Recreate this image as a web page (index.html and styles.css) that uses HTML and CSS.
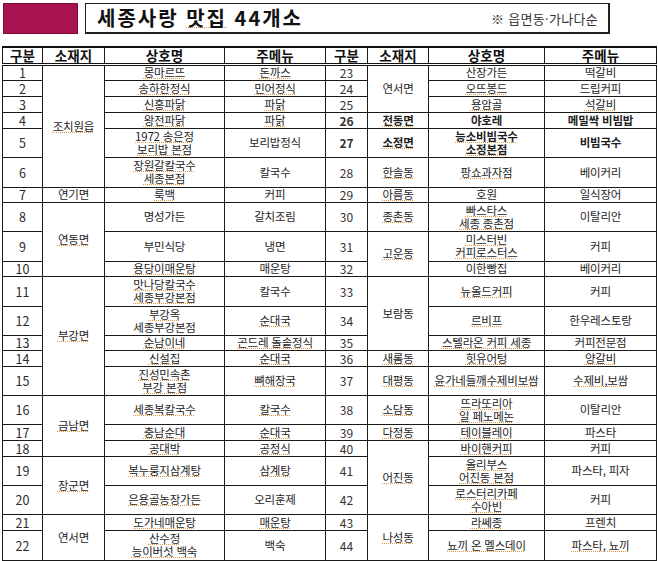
FILE: index.html
```html
<!DOCTYPE html>
<html lang="ko">
<head>
<meta charset="utf-8">
<title>세종사랑 맛집 44개소</title>
<link rel="stylesheet" href="styles.css">
</head>
<body>
<header class="top">
  <div class="swatch"></div>
  <div class="titlebox">
    <h1 class="title">세종사랑 <span class="u">맛집</span> 44개소</h1>
    <span class="note">※ 읍면동·가나다순</span>
  </div>
</header>
<table class="list">
  <colgroup>
    <col class="c-no"><col class="c-area"><col class="c-name"><col class="c-menu">
    <col class="c-no2"><col class="c-area2"><col class="c-name2"><col class="c-menu2">
  </colgroup>
  <thead>
    <tr class="hd">
      <th>구분</th><th>소재지</th><th>상호명</th><th>주메뉴</th>
      <th>구분</th><th>소재지</th><th>상호명</th><th>주메뉴</th>
    </tr>
  </thead>
  <tbody>
    <tr class="r16">
      <td class="no">1</td><td rowspan="6"><span class="u">조치원읍</span></td><td><span class="u">몽마르뜨</span></td><td><span class="u">돈까스</span></td>
      <td class="no2">23</td><td rowspan="3">연서면</td><td>산장가든</td><td>떡갈비</td>
    </tr>
    <tr class="r16">
      <td class="no">2</td><td><span class="u">송하한정식</span></td><td><span class="u">민어정식</span></td>
      <td class="no2">24</td><td><span class="u">오뜨봉드</span></td><td>드립커피</td>
    </tr>
    <tr class="r16">
      <td class="no">3</td><td><span class="u">신흥파닭</span></td><td><span class="u">파닭</span></td>
      <td class="no2">25</td><td><span class="u">용암골</span></td><td><span class="u">석갈비</span></td>
    </tr>
    <tr class="r16">
      <td class="no">4</td><td><span class="u">왕전파닭</span></td><td><span class="u">파닭</span></td>
      <td class="no2 b">26</td><td class="b"><span class="u">전동면</span></td><td class="b">야호레</td><td class="b">메밀싹 비빔밥</td>
    </tr>
    <tr class="r29">
      <td class="no">5</td><td><span class="u">1972 송은정</span><br><span class="u">보리밥 본점</span></td><td>보리밥정식</td>
      <td class="no2 b">27</td><td class="b"><span class="u">소정면</span></td><td class="b"><span class="u">능소비빔국수</span><br><span class="u">소정본점</span></td><td class="b">비빔국수</td>
    </tr>
    <tr class="r30">
      <td class="no">6</td><td><span class="u">장원갈칼국수</span><br><span class="u">세종본점</span></td><td>칼국수</td>
      <td class="no2">28</td><td><span class="u">한솔동</span></td><td><span class="u">팡쇼과자점</span></td><td>베이커리</td>
    </tr>
    <tr class="r15">
      <td class="no">7</td><td>연기면</td><td><span class="u">룩백</span></td><td>커피</td>
      <td class="no2">29</td><td><span class="u">아름동</span></td><td>호원</td><td>일식장어</td>
    </tr>
    <tr class="r29">
      <td class="no">8</td><td rowspan="3"><span class="u">연동면</span></td><td>명성가든</td><td>갈치조림</td>
      <td class="no2">30</td><td><span class="u">종촌동</span></td><td><span class="u">빠스타스</span><br><span class="u">세종 종촌점</span></td><td>이탈리안</td>
    </tr>
    <tr class="r30">
      <td class="no">9</td><td>부민식당</td><td>냉면</td>
      <td class="no2">31</td><td rowspan="2"><span class="u">고운동</span></td><td><span class="u">미스터빈</span><br><span class="u">커피로스터스</span></td><td>커피</td>
    </tr>
    <tr class="r15">
      <td class="no">10</td><td><span class="u">용당이매운탕</span></td><td>매운탕</td>
      <td class="no2">32</td><td>이한빵집</td><td>베이커리</td>
    </tr>
    <tr class="r30">
      <td class="no">11</td><td rowspan="5"><span class="u">부강면</span></td><td><span class="u">맛나당칼국수</span><br><span class="u">세종부강본점</span></td><td>칼국수</td>
      <td class="no2">33</td><td rowspan="3">보람동</td><td><span class="u">뉴올드커피</span></td><td>커피</td>
    </tr>
    <tr class="r29">
      <td class="no">12</td><td><span class="u">부강옥</span><br>세종부강본점</td><td><span class="u">순대국</span></td>
      <td class="no2">34</td><td><span class="u">르비프</span></td><td>한우레스토랑</td>
    </tr>
    <tr class="r15">
      <td class="no">13</td><td><span class="u">순남이네</span></td><td><span class="u">곤드레 돌솥정식</span></td>
      <td class="no2">35</td><td><span class="u">스텔라온 커피 세종</span></td><td>커피전문점</td>
    </tr>
    <tr class="r16">
      <td class="no">14</td><td><span class="u">신설집</span></td><td><span class="u">순대국</span></td>
      <td class="no2">36</td><td><span class="u">새롬동</span></td><td><span class="u">힛유어텅</span></td><td><span class="u">양갈비</span></td>
    </tr>
    <tr class="r29">
      <td class="no">15</td><td><span class="u">진성민속촌</span><br><span class="u">부강 본점</span></td><td><span class="u">뼈해장국</span></td>
      <td class="no2">37</td><td><span class="u">대평동</span></td><td><span class="u">윤가네들깨수제비보쌈</span></td><td><span class="u">수제비,보쌈</span></td>
    </tr>
    <tr class="r29">
      <td class="no">16</td><td rowspan="3"><span class="u">금남면</span></td><td><span class="u">세종복칼국수</span></td><td><span class="u">칼국수</span></td>
      <td class="no2">38</td><td><span class="u">소담동</span></td><td><span class="u">뜨라또리아</span><br><span class="u">일 페노메논</span></td><td>이탈리안</td>
    </tr>
    <tr class="r16">
      <td class="no">17</td><td><span class="u">충남순대</span></td><td><span class="u">순대국</span></td>
      <td class="no2">39</td><td><span class="u">다정동</span></td><td><span class="u">테이블레이</span></td><td>파스타</td>
    </tr>
    <tr class="r16">
      <td class="no">18</td><td><span class="u">공대박</span></td><td><span class="u">공정식</span></td>
      <td class="no2">40</td><td rowspan="3"><span class="u">어진동</span></td><td><span class="u">바이핸커피</span></td><td>커피</td>
    </tr>
    <tr class="r29">
      <td class="no">19</td><td rowspan="2"><span class="u">장군면</span></td><td><span class="u">복누룽지삼계탕</span></td><td><span class="u">삼계탕</span></td>
      <td class="no2">41</td><td><span class="u">올리부스</span><br><span class="u">어진동 본점</span></td><td>파스타, 피자</td>
    </tr>
    <tr class="r29">
      <td class="no">20</td><td><span class="u">은용골농장가든</span></td><td>오리훈제</td>
      <td class="no2">42</td><td><span class="u">로스터리카페</span><br><span class="u">수아빈</span></td><td>커피</td>
    </tr>
    <tr class="r16">
      <td class="no">21</td><td rowspan="2">연서면</td><td><span class="u">도가네매운탕</span></td><td><span class="u">매운탕</span></td>
      <td class="no2">43</td><td rowspan="2"><span class="u">나성동</span></td><td><span class="u">라쎄종</span></td><td>프렌치</td>
    </tr>
    <tr class="r30">
      <td class="no">22</td><td><span class="u">산수정</span><br><span class="u">능이버섯 백숙</span></td><td>백숙</td>
      <td class="no2">44</td><td><span class="u">뇨끼 온 멜스데이</span></td><td><span class="u">파스타, 뇨끼</span></td>
    </tr>
  </tbody>
</table>
</body>
</html>
```
FILE: styles.css
```css
html, body {
  margin: 0;
  padding: 0;
  background: #fff;
}
body {
  font-family: "Noto Sans CJK KR", "Noto Sans", sans-serif;
  color: #1e1e1e;
}
.top {
  display: flex;
  align-items: stretch;
  gap: 7px;
  padding: 3px 0 0 3px;
  height: 31px;
}
.swatch {
  box-sizing: border-box;
  width: 75px;
  background: #a8134f;
  border: 1px solid #7d0c39;
}
.titlebox {
  box-sizing: border-box;
  width: 525px;
  display: flex;
  align-items: center;
  justify-content: space-between;
  border: 1px solid #222;
  border-right-width: 2px;
  border-bottom-width: 2px;
  padding: 0 10px 0 11px;
}
.title {
  margin: 0;
  font-size: 20px;
  font-weight: 700;
  letter-spacing: 2px;
  line-height: 1;
  color: #111;
}
.note {
  font-size: 13px;
  color: #333;
  letter-spacing: 0.3px;
}
.u {
  text-decoration-line: underline;
  text-decoration-style: dotted;
  text-decoration-color: #e8953f;
  text-decoration-thickness: 1px;
  text-underline-offset: 1px;
}
.list {
  margin: 12px 0 0 2px;
  width: 654px;
  table-layout: fixed;
  border-collapse: collapse;
  border: 1px solid #111;
  border-top: 2px solid #111;
}
.c-no { width: 40px; }
.c-area { width: 62px; }
.c-name { width: 120px; }
.c-menu { width: 101px; }
.c-no2 { width: 42px; }
.c-area2 { width: 61px; }
.c-name2 { width: 116px; }
.c-menu2 { width: 112px; }
.list th, .list td {
  border: 1px solid #1a1a1a;
  padding: 0;
  text-align: center;
  vertical-align: middle;
  overflow: visible;
  white-space: nowrap;
}
.list th {
  font-size: 13.5px;
  font-weight: 700;
  line-height: 14px;
  border-bottom: 3px double #111;
  color: #111;
}
.hd { height: 17px; }
.list td {
  font-size: 11.5px;
  line-height: 13px;
  letter-spacing: -0.2px;
}
.list td.no {
  font-size: 12.5px;
  color: #2a2a2a;
  letter-spacing: 0;
}
.list td.no2 {
  font-size: 12px;
  color: #333;
  letter-spacing: 0;
}
.list td.b {
  font-weight: 700;
}
.r15 { height: 15px; }
.r16 { height: 16px; }
.r28 { height: 28px; }
.r29 { height: 29px; }
.r30 { height: 30px; }
```
